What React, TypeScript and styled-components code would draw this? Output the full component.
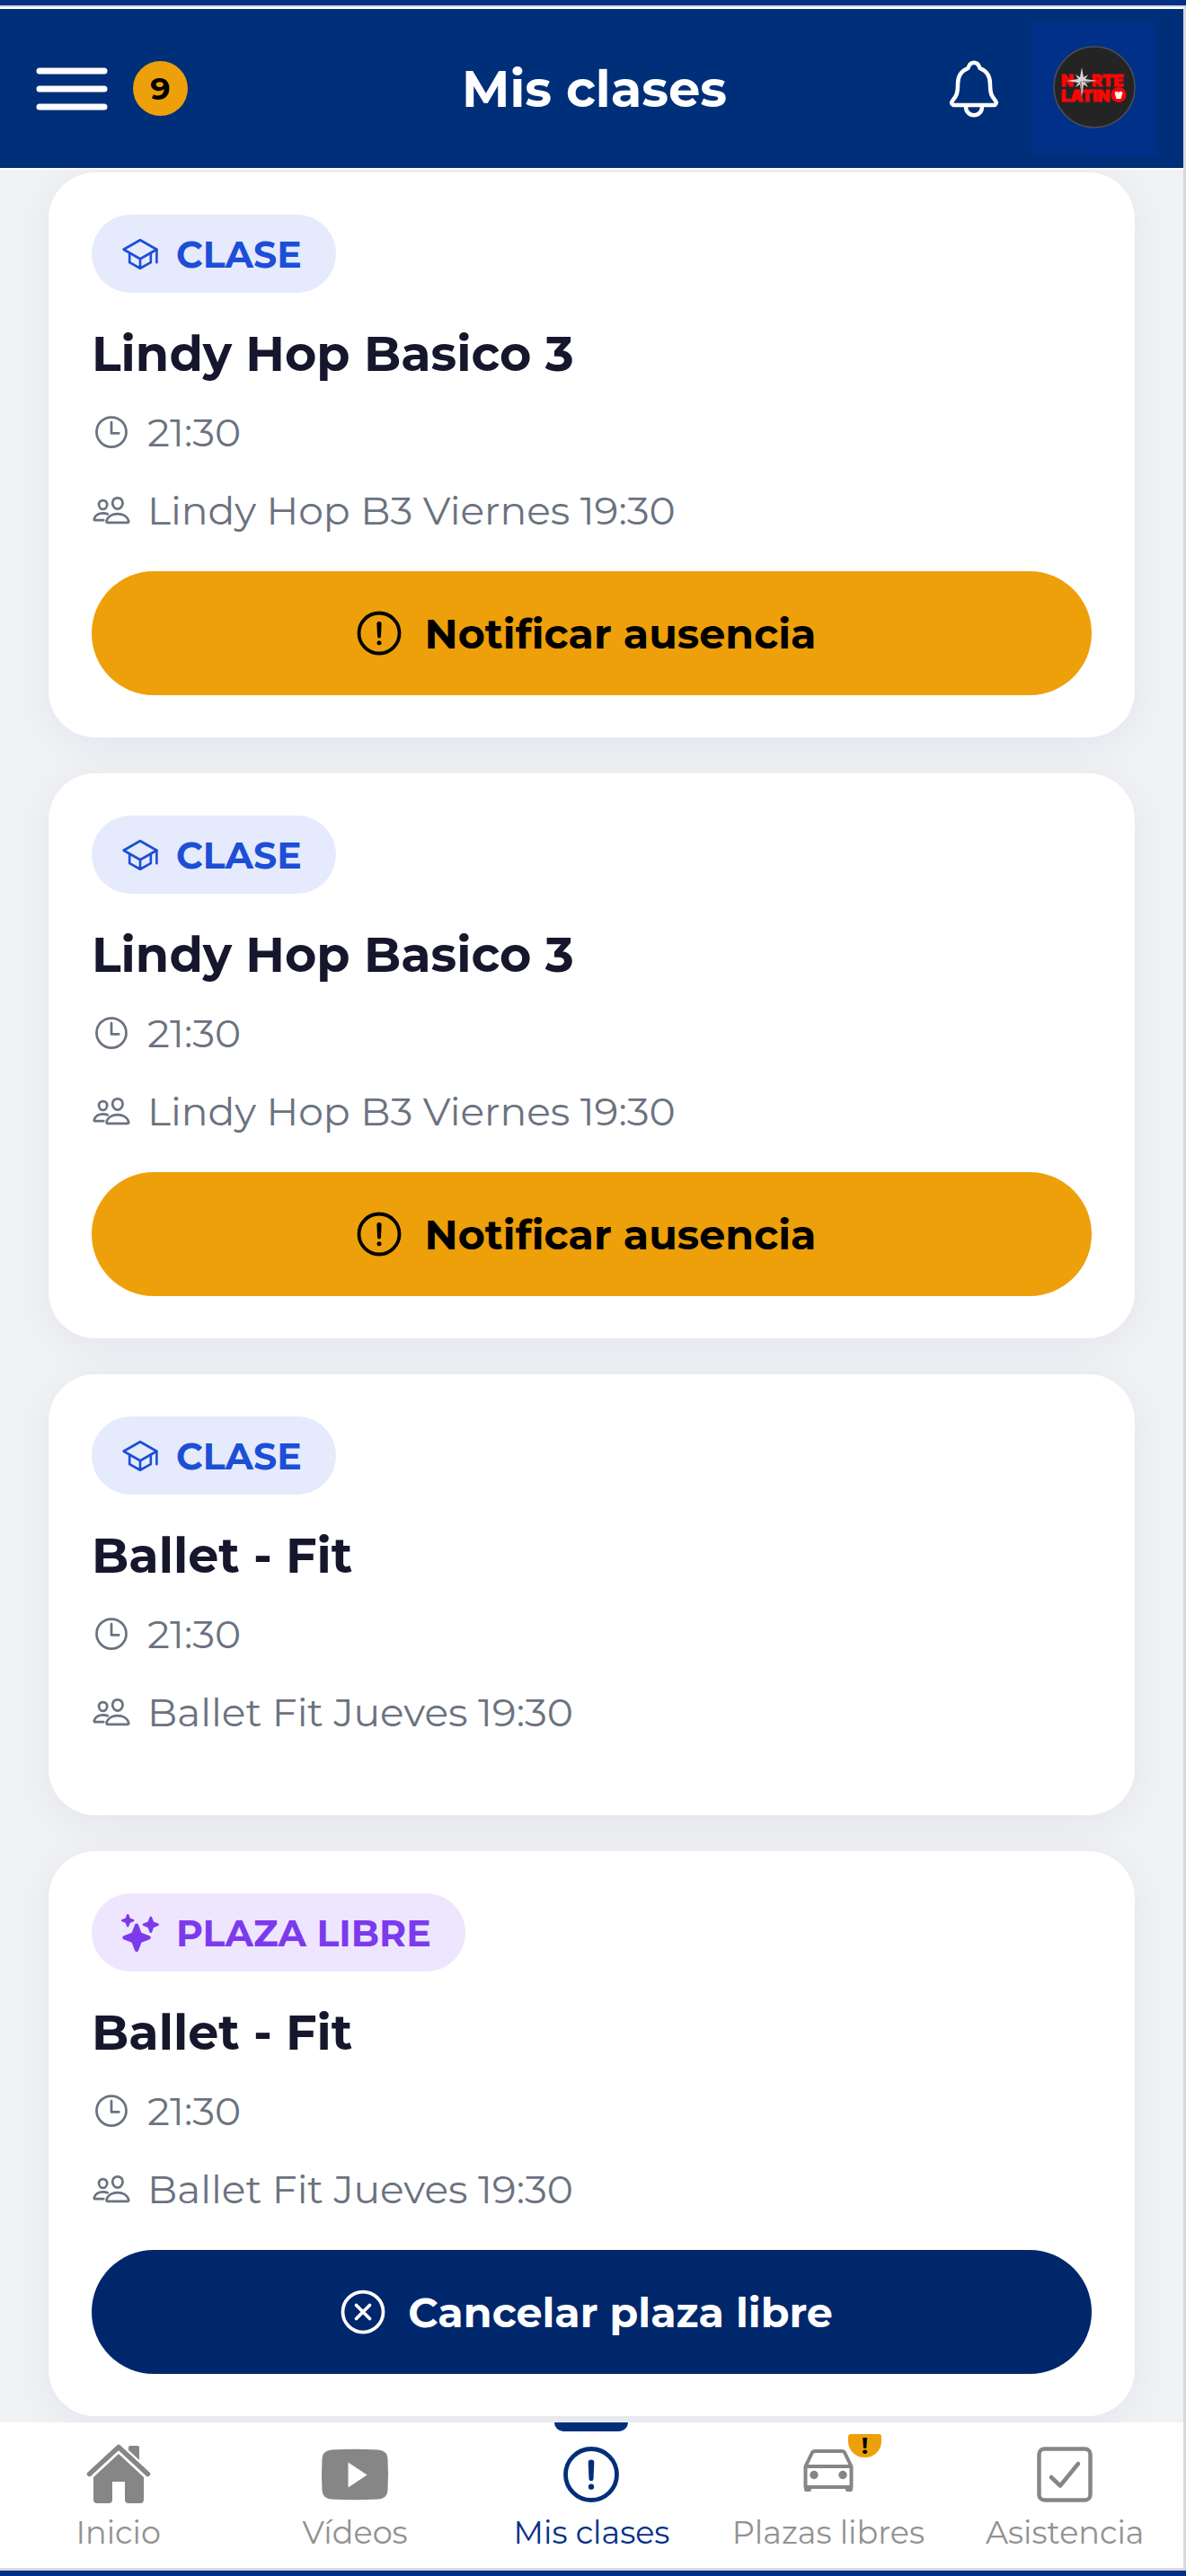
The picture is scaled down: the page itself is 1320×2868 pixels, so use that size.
import React from "react";
import styled, { createGlobalStyle } from "styled-components";
import {
  IoSchoolOutline,
  IoTimeOutline,
  IoPeopleOutline,
  IoSparkles,
  IoNotificationsOutline,
  IoCloseCircleOutline,
} from "react-icons/io5";

const colors = {
  brand: "#003087",
  header: "#002f7a",
  navy: "#00276b",
  amber: "#eda009",
  page: "#f0f2f6",
  ink: "#16162d",
  muted: "#6b7280",
  tab: "#868686",
  tabLabel: "#929292",
  edge: "#dcd8da",
};

const GlobalStyle = createGlobalStyle`
  *, *::before, *::after { box-sizing: border-box; }
  body {
    margin: 0;
    background: ${colors.page};
    font-family: Montserrat, Inter, "Liberation Sans", sans-serif;
  }
  button { font: inherit; border: 0; cursor: pointer; }
  h1, h2, p, ul { margin: 0; padding: 0; }
  svg { display: block; flex: none; }
`;

const Shell = styled.div`
  display: flex;
  flex-direction: column;
  min-height: 100vh;
  border-top: 6px solid ${colors.brand};
  border-bottom: 6px solid ${colors.brand};
`;

const Frame = styled.div`
  flex: 1;
  display: flex;
  flex-direction: column;
  border: solid ${colors.edge};
  border-width: 2px 3px 3px 0;
`;

const Header = styled.header`
  display: grid;
  grid-template-columns: 1fr auto 1fr;
  align-items: center;
  height: 181px;
  padding: 0 30px 0 36px;
  background: ${colors.header};
  border: solid #ffffff;
  border-width: 2px 0;
  color: #ffffff;
`;

const HeaderSide = styled.div<{ $end?: boolean }>`
  display: flex;
  align-items: center;
  gap: 28px;
  justify-content: ${(p) => (p.$end ? "flex-end" : "flex-start")};
`;

const IconButton = styled.button`
  display: flex;
  padding: 0;
  background: none;
  color: inherit;
`;

const CountBadge = styled.span`
  display: flex;
  align-items: center;
  justify-content: center;
  width: 61px;
  height: 61px;
  border-radius: 50%;
  background: ${colors.amber};
  color: #000000;
  font-size: 35px;
  font-weight: 700;
`;

const HeaderTitle = styled.h1`
  font-size: 56px;
  line-height: 68px;
  font-weight: 700;
`;

const AvatarButton = styled(IconButton)`
  align-items: center;
  justify-content: center;
  width: 139px;
  height: 148px;
  padding-bottom: 4px;
  background: ${colors.brand};
`;

const Content = styled.main`
  flex: 1;
  padding: 3px 54px 7px;
`;

const CardList = styled.ul`
  display: flex;
  flex-direction: column;
  gap: 40px;
  list-style: none;
`;

const Card = styled.li`
  display: flex;
  flex-direction: column;
  align-items: flex-start;
  padding: 47px 48px;
  border-radius: 52px;
  background: #ffffff;
  box-shadow: 0 8px 48px rgba(30, 20, 50, 0.06);
`;

const Tag = styled.span<{ $free: boolean }>`
  display: flex;
  align-items: center;
  gap: 19px;
  height: 87px;
  padding: 0 38px 0 33px;
  border-radius: 44px;
  background: ${(p) => (p.$free ? "#eee6fe" : "#e5ebfc")};
  color: ${(p) => (p.$free ? "#7c3aed" : "#1d4ed8")};
  font-size: 41px;
  font-weight: 700;
`;

const CardTitle = styled.h2`
  margin: 36px 0 27px;
  font-size: 54px;
  line-height: 64px;
  font-weight: 700;
  color: ${colors.ink};
`;

const Details = styled.div`
  display: flex;
  flex-direction: column;
  gap: 31px;
  margin-bottom: 40px;
`;

const Detail = styled.p`
  display: flex;
  align-items: center;
  gap: 18px;
  color: ${colors.muted};
  font-size: 44px;
  line-height: 56px;
`;

const ActionButton = styled.button<{ $cancel: boolean }>`
  display: flex;
  align-items: center;
  justify-content: center;
  gap: 20px;
  align-self: stretch;
  height: 138px;
  padding: 0 16px 0 0;
  border-radius: 69px;
  background: ${(p) => (p.$cancel ? colors.navy : colors.amber)};
  color: ${(p) => (p.$cancel ? "#ffffff" : "#000000")};
  font-size: 46px;
  font-weight: 700;
`;

const TabBar = styled.nav`
  display: grid;
  grid-template-columns: repeat(5, 1fr);
  height: 162px;
  background: #ffffff;
`;

const Tab = styled.a<{ $active: boolean }>`
  position: relative;
  display: flex;
  flex-direction: column;
  align-items: center;
  gap: 9px;
  padding-top: 22px;
  color: ${(p) => (p.$active ? colors.brand : colors.tabLabel)};
  font-size: 35px;
  line-height: 40px;
  font-weight: 400;
  text-decoration: none;
  white-space: nowrap;
  &::before {
    content: "";
    display: ${(p) => (p.$active ? "block" : "none")};
    position: absolute;
    top: 0;
    width: 82px;
    height: 10px;
    border-radius: 0 0 10px 10px;
    background: ${colors.header};
  }
`;

const TabIcon = styled.span<{ $active: boolean }>`
  position: relative;
  display: flex;
  align-items: center;
  justify-content: center;
  width: 76px;
  height: 72px;
  color: ${(p) => (p.$active ? colors.header : colors.tab)};
`;

const TabAlert = styled.span`
  position: absolute;
  left: 60px;
  top: -9px;
  width: 37px;
  height: 26px;
  border-radius: 3px 3px 18px 18px;
  background: ${colors.amber};
  color: #000000;
  font-size: 26px;
  line-height: 26px;
  font-weight: 700;
  text-align: center;
`;

const MenuIcon = () => (
  <svg width="84" height="48" viewBox="0 0 84 48" stroke="currentColor" strokeWidth="7" strokeLinecap="round">
    <path d="M8 4H80M8 24H80M8 44H80" />
  </svg>
);

const AlertIcon = ({ size }: { size: number }) => (
  <svg width={size} height={size} viewBox="0 0 60 60" fill="none" stroke="currentColor">
    <circle cx="30" cy="30" r="22.5" strokeWidth="3.8" />
    <path d="M27.4 19.500a2.6 2.6 0 0 1 5.2 0l-.6 14a2 2 0 0 1-4 0z" fill="currentColor" stroke="none" />
    <circle cx="30" cy="40.800" r="2.500" fill="currentColor" stroke="none" />
  </svg>
);

const HomeIcon = () => (
  <svg width="72" height="68" viewBox="0 0 72 68" fill="currentColor">
    <path d="M47 4q0-2 2-2h8q2 0 2 2v20L47 12z" />
    <path d="M3.500 33.500L36 3.500l32.500 30" fill="none" stroke="#ffffff" strokeWidth="10" />
    <path d="M3.500 33.500L36 3.500l32.500 30" fill="none" stroke="currentColor" strokeWidth="5.500" strokeLinecap="round" strokeLinejoin="round" />
    <path d="M36 11L64 37v25q0 4-4 4H47q-4 0-4-4V42H29v20q0 4-4 4H12q-4 0-4-4V37z" />
  </svg>
);

const VideoIcon = () => (
  <svg width="76" height="58" viewBox="0 0 76 58">
    <path d="M12 1.500Q38 0 64 1.500q10 1 10.500 10 1 17 0 35-.500 9-10.500 10-26 1.500-52 0-10-1-10.500-10-1-18 0-35Q2 2.500 12 1.500z" fill="currentColor" />
    <path d="M30.500 15.500v28l21-14z" fill="#ffffff" />
  </svg>
);

const CarIcon = () => (
  <svg width="56" height="56" viewBox="0 0 56 56" fill="none" stroke="currentColor" strokeWidth="4" strokeLinejoin="round">
    <path d="M2.500 19L9.500 4.500Q10.500 2 13 2h30q2.500 0 3.500 2.500L53.500 19v23h-51z" />
    <path d="M2.500 19h51" />
    <path d="M1 40h8v5q0 2-2 2H3q-2 0-2-2zM47 40h8v5q0 2-2 2h-4q-2 0-2-2z" fill="currentColor" stroke="none" />
    <circle cx="12" cy="28.500" r="4.700" fill="currentColor" stroke="none" />
    <circle cx="44" cy="28.500" r="4.700" fill="currentColor" stroke="none" />
  </svg>
);

const CheckIcon = () => (
  <svg width="62" height="62" viewBox="0 0 62 62" fill="none" stroke="currentColor" strokeWidth="4.500" strokeLinecap="round" strokeLinejoin="round">
    <rect x="2.500" y="2.500" width="57" height="57" rx="6" />
    <path d="M16 34l10 9.500L46 19" />
  </svg>
);

const Logo = () => (
  <svg width="92" height="92" viewBox="0 0 92 92" role="img" aria-label="Norte Latino">
    <circle cx="46" cy="46" r="45" fill="#242424" stroke="#4a4d55" strokeWidth="1.500" />
    <g fill="#fb0505" stroke="#fb0505" strokeWidth="1" fontFamily="Inter, sans-serif" fontWeight="900" fontSize="18">
      <text x="9" y="45">N</text>
      <text x="43" y="45">RTE</text>
      <text x="9" y="62">LATIN</text>
    </g>
    <circle cx="73" cy="54.500" r="8.500" fill="#fb0505" />
    <path d="M68.500 52q4-3 4.500 1 .500-4 4.500-1l-2 7h-5z" fill="#ffffff" />
    <path d="M32 24l2 11 5-3-3 5 13 2-13 2 3 5-5-3-2 14-2-14-5 3 3-5-13-2 13-2-3-5 5 3z" fill="#d8d4d0" />
    <path d="M32 24v31l-2-14-5 3 7-5zM49 39H32l7 5-3-3z" fill="#8d8987" />
  </svg>
);

type ClassItem = { id: number; title: string; time: string; group: string; free?: boolean; action?: "notify" | "cancel" };

const classes: ClassItem[] = [
  { id: 1, title: "Lindy Hop Basico 3", time: "21:30", group: "Lindy Hop B3 Viernes 19:30", action: "notify" },
  { id: 2, title: "Lindy Hop Basico 3", time: "21:30", group: "Lindy Hop B3 Viernes 19:30", action: "notify" },
  { id: 3, title: "Ballet - Fit", time: "21:30", group: "Ballet Fit Jueves 19:30" },
  { id: 4, title: "Ballet - Fit", time: "21:30", group: "Ballet Fit Jueves 19:30", free: true, action: "cancel" },
];

const tabs = [
  { label: "Inicio", icon: <HomeIcon /> },
  { label: "Vídeos", icon: <VideoIcon /> },
  { label: "Mis clases", icon: <AlertIcon size={76} />, active: true },
  { label: "Plazas libres", icon: <CarIcon />, alert: true },
  { label: "Asistencia", icon: <CheckIcon /> },
];

const ClassCard = ({ item }: { item: ClassItem }) => (
  <Card>
    <Tag $free={!!item.free}>
      {item.free ? <IoSparkles size={42} /> : <IoSchoolOutline size={42} />}
      {item.free ? "PLAZA LIBRE" : "CLASE"}
    </Tag>
    <CardTitle>{item.title}</CardTitle>
    <Details>
      <Detail>
        <IoTimeOutline size={44} />
        {item.time}
      </Detail>
      <Detail>
        <IoPeopleOutline size={44} />
        {item.group}
      </Detail>
    </Details>
    {item.action && (
      <ActionButton type="button" $cancel={item.action === "cancel"}>
        {item.action === "cancel" ? <IoCloseCircleOutline size={60} /> : <AlertIcon size={60} />}
        {item.action === "cancel" ? "Cancelar plaza libre" : "Notificar ausencia"}
      </ActionButton>
    )}
  </Card>
);

export default function App() {
  return (
    <>
      <GlobalStyle />
      <Shell>
        <Frame>
          <Header>
            <HeaderSide>
              <IconButton type="button" aria-label="Menú">
                <MenuIcon />
              </IconButton>
              <CountBadge>9</CountBadge>
            </HeaderSide>
            <HeaderTitle>Mis clases</HeaderTitle>
            <HeaderSide $end>
              <IconButton type="button" aria-label="Notificaciones">
                <IoNotificationsOutline size={72} />
              </IconButton>
              <AvatarButton type="button" aria-label="Perfil">
                <Logo />
              </AvatarButton>
            </HeaderSide>
          </Header>
          <Content>
            <CardList>
              {classes.map((item) => (
                <ClassCard key={item.id} item={item} />
              ))}
            </CardList>
          </Content>
          <TabBar>
            {tabs.map((tab) => (
              <Tab key={tab.label} href="#" $active={!!tab.active} aria-current={tab.active ? "page" : undefined}>
                <TabIcon $active={!!tab.active}>
                  {tab.icon}
                  {tab.alert && <TabAlert>!</TabAlert>}
                </TabIcon>
                {tab.label}
              </Tab>
            ))}
          </TabBar>
        </Frame>
      </Shell>
    </>
  );
}
